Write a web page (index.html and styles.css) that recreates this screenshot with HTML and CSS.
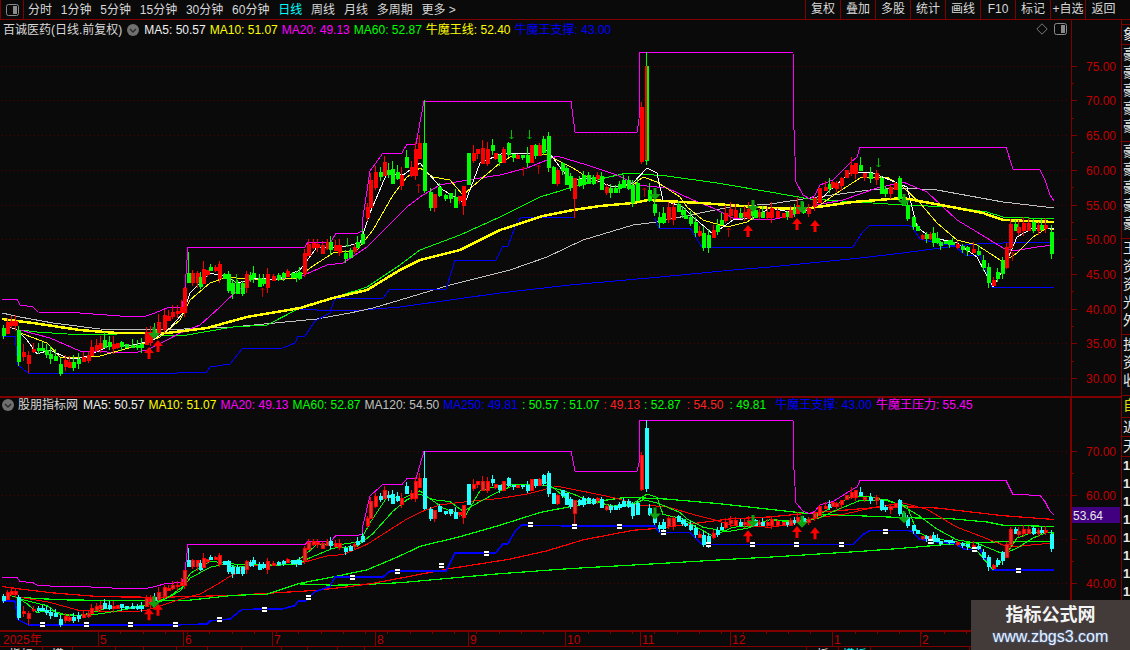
FILE: index.html
```html
<!DOCTYPE html>
<html lang="zh">
<head>
<meta charset="utf-8">
<title>百诚医药 日线</title>
<link rel="stylesheet" href="styles.css">
</head>
<body>
<div class="app">
  <header class="topbar">
    <div class="toggle-cell">
      <svg class="toggle" viewBox="0 0 13 12"><rect x=".5" y=".5" width="12" height="11" rx="2"/><rect class="toggle-fill" x="7" y="2" width="4" height="8"/></svg>
    </div>
    <nav class="tabs">
      <span>分时</span><span>1分钟</span><span>5分钟</span><span>15分钟</span><span>30分钟</span><span>60分钟</span>
      <span class="active">日线</span><span>周线</span><span>月线</span><span>多周期</span><span>更多 &gt;</span>
    </nav>
    <div class="tools">
      <span>复权</span><span>叠加</span><span>多股</span><span>统计</span><span>画线</span><span>F10</span><span>标记</span><span>+自选</span><span>返回</span>
    </div>
  </header>

  <div class="main">
    <div class="charts">
      <section class="panel panel-top">
        <div class="info info-top">
          <span class="title">百诚医药(日线.前复权)</span>
          <svg class="round round-top" viewBox="0 0 12 12"><circle cx="6" cy="6" r="6"/><path d="M3 5l3 3 3-3"/></svg>
          <span class="white">MA5: 50.57</span>
          <span class="yellow">MA10: 51.07</span>
          <span class="magenta">MA20: 49.13</span>
          <span class="lime">MA60: 52.87</span>
          <span class="yellow">牛魔王线: 52.40</span>
          <span class="blue">牛魔王支撑: 43.00</span>
          <svg class="diamond" viewBox="0 0 12 12"><path d="M6 .8L11.2 6 6 11.2.8 6z"/></svg>
          <svg class="toggle" viewBox="0 0 13 12"><rect x=".5" y=".5" width="12" height="11" rx="2"/><rect class="toggle-fill" x="7" y="2" width="4" height="8"/></svg>
        </div>
        <svg id="top" class="plot plot-top" viewBox="0 42 1121 354">
          <g class="ylabels">
            <text x="1116" y="70.5">75.00</text><text x="1116" y="105">70.00</text><text x="1116" y="140">65.00</text>
            <text x="1116" y="174.5">60.00</text><text x="1116" y="209.5">55.00</text><text x="1116" y="244">50.00</text>
            <text x="1116" y="279">45.00</text><text x="1116" y="313.5">40.00</text><text x="1116" y="348">35.00</text>
            <text x="1116" y="383">30.00</text>
          </g>
        </svg>
      </section>

      <section class="panel panel-bottom">
        <div class="info info-bottom">
          <svg class="round" viewBox="0 0 12 12"><circle cx="6" cy="6" r="6"/><path d="M3 5l3 3 3-3"/></svg>
          <span class="title">股朋指标网</span>
          <span class="white ma5-bottom">MA5: 50.57</span>
          <span class="yellow">MA10: 51.07</span>
          <span class="magenta">MA20: 49.13</span>
          <span class="lime">MA60: 52.87</span>
          <span class="grey">MA120: 54.50</span>
          <span class="blue">MA250: 49.81</span>
          <span class="lime">: 50.57</span>
          <span class="lime">: 51.07</span>
          <span class="red">: 49.13</span>
          <span class="lime">: 52.87</span>
          <span class="red nudge">: 54.50</span>
          <span class="lime nudge">: 49.81</span>
          <span class="blue nudge-more">牛魔王支撑: 43.00</span>
          <span class="magenta">牛魔王压力: 55.45</span>
        </div>
        <svg id="bottom" class="plot plot-bottom" viewBox="0 416 1121 214">
          <g class="ylabels">
            <text x="1116" y="455.5">70.00</text><text x="1116" y="499.5">60.00</text>
            <text x="1116" y="544">50.00</text><text x="1116" y="588">40.00</text>
          </g>
          <rect class="price-box" x="1072" y="507" width="48" height="16"/>
          <text class="price-text" x="1073" y="519.5">53.64</text>
        </svg>
      </section>

      <div class="timeaxis">
        <svg id="time" class="time-svg" viewBox="0 632 1121 14">
          <g class="tlabels">
            <text x="3" y="644">2025年</text><text x="100" y="644">5</text><text x="185" y="644">6</text>
            <text x="274" y="644">7</text><text x="377" y="644">8</text><text x="470" y="644">9</text>
            <text x="567" y="644">10</text><text x="642" y="644">11</text><text x="732" y="644">12</text>
            <text x="834" y="644">1</text><text x="922" y="644">2</text>
          </g>
        </svg>
      </div>

      <div class="tabstrip">
        <span class="s43">指标</span><span class="s30">模</span><span class="s43"></span><span class="s28"></span><span class="s33"></span><span class="s31"></span><span class="s34"></span><span class="s40"></span><span class="s26"></span><span class="s30"></span><span class="s27"></span><span class="s442"></span><span class="s32">板</span><span class="s32 cyan">模板</span><span class="s99"></span>
      </div>
    </div>

    <aside class="sidebar">
      <div class="side-gap"></div>
      <div class="side-block b1">象</div>
      <div class="side-block b2">豪<br>豪<br>豪<br>豪<br>豪</div>
      <div class="side-block b2">豪<br>豪<br>豪<br>豪<br>豪</div>
      <div class="side-block b3">王<br>资<br>资<br>光<br>外</div>
      <div class="side-block b4">投<br>资<br>收</div>
      <div class="side-block b5">自</div>
      <div class="side-block b6">近</div>
      <div class="side-block b7">天</div>
      <div class="side-digits">1<br>1<br>1<br>1<br>1<br>1<br>1<br>1<br>1<br>1</div>
    </aside>
  </div>

  <aside class="watermark">
    <div class="wm-title">指标公式网</div>
    <div class="wm-url">www.zbgs3.com</div>
  </aside>
</div>
<script src="chart.js"></script>
</body>
</html>
```

FILE: styles.css
```css
* { box-sizing: border-box; }
html, body { margin: 0; padding: 0; }
body {
  width: 1130px;
  height: 650px;
  overflow: hidden;
  background: #0a0a0a;
  color: #d8d8d8;
  font: 12px/14px "Liberation Sans", "Noto Sans CJK SC", sans-serif;
}
.app { position: relative; width: 1130px; height: 650px; display: flex; flex-direction: column; }

/* top bar */
.topbar { height: 20px; flex: none; display: flex; border-bottom: 1px solid #800000; }
.toggle-cell { width: 24px; border: 1px solid #800000; border-top: 0; border-bottom: 0; display: flex; align-items: center; justify-content: center; }
.toggle { width: 13px; height: 12px; flex: none; }
.toggle rect { fill: none; stroke: #8a8a8a; }
.toggle .toggle-fill { fill: #8a8a8a; stroke: none; }
.tabs { display: flex; gap: 8.8px; padding-left: 4px; align-items: center; flex: 1; }
.tabs .active { color: #00ffff; }
.tools { display: flex; width: 316px; margin-right: 9px; }
.tools span { width: 35px; text-align: center; line-height: 19px; border-left: 1px solid #800000; }
.tools span:last-child { width: 36px; }

/* main */
.main { flex: 1; display: flex; min-height: 0; }
.charts { width: 1121px; flex: none; display: flex; flex-direction: column; }
.panel { display: flex; flex-direction: column; flex: none; }
.panel-top { height: 376px; background: linear-gradient(#800000, #800000) 1071px 0 / 1px 100% no-repeat; }
.panel-bottom {
  height: 234px;
  border-top: 2px solid #800000;
  background: linear-gradient(#800000, #800000) 1070px 0 / 2px 100% no-repeat;
}
.info { display: flex; flex: none; white-space: nowrap; align-items: flex-start; gap: 4px; }
.info-top { height: 22px; padding: 3px 54px 0 3px; }
.info-bottom { height: 18px; padding: 0 0 0 2px; }
.title { color: #d8d8d8; }
.white { color: #f0f0f0; }
.yellow { color: #ffff00; }
.magenta { color: #ff00ff; }
.lime { color: #00ff00; }
.blue { color: #0000ff; }
.grey { color: #c0c0c0; }
.red { color: #ff2020; }
.nudge { margin-left: 2px; }
.nudge-more { margin-left: 5px; }
.ma5-bottom { margin-left: 1px; }
.round { width: 12px; height: 12px; flex: none; margin-top: 1px; }
.round-top { margin-left: 1px; margin-right: 1px; }
.round circle { fill: #707070; }
.round path { fill: none; stroke: #2a2a2a; stroke-width: 1.4; }
.diamond { width: 12px; height: 12px; margin-left: auto; margin-right: 2px; flex: none; }
.diamond path { fill: none; stroke: #7a7a7a; }

.plot { display: block; flex: 1; width: 1121px; }
.ylabels text { fill: #c00000; font-size: 12px; text-anchor: end; }
.price-box { fill: #400080; }
.price-text { fill: #e8e8e8; font-size: 12px; }

/* chart marks */
.plot polyline { fill: none; shape-rendering: crispEdges; stroke-linejoin: round; }
.grid { stroke: #5a0000; stroke-dasharray: 1 3; shape-rendering: crispEdges; }
.ticks { stroke: #800000; fill: none; shape-rendering: crispEdges; }
.candle { shape-rendering: crispEdges; stroke-width: 1; }
.plot-top .up { fill: #ff0000; stroke: #ff0000; }
.plot-top .down { fill: #00ff00; stroke: #00ff00; }
.plot-bottom .up { fill: #ee2a2a; stroke: #ff0000; }
.plot-bottom .down { fill: #22ffff; stroke: #22ffff; }
.spike { fill: #ff0000; stroke: none; }
.arrow-up { fill: #ff0000; }
.arrow-down { fill: #12a312; }
.mini-up { stroke: #c80000; fill: none; }
.mini-down { stroke: #00c000; fill: none; }
.dash { fill: #ffffff; }
.dash-gap { fill: #0a0a0a; }

.plot-top .ma5 { stroke: #ffffff; stroke-width: 1; }
.plot-top .ma10 { stroke: #ffff00; stroke-width: 1; }
.plot-top .ma20 { stroke: #ff00ff; stroke-width: 1; }
.plot-top .ma60 { stroke: #00ff00; stroke-width: 1; }
.plot-top .ma120 { stroke: #c0c0c0; stroke-width: 1; }
.plot-top .ma250 { stroke: #0000ff; stroke-width: 1; }
.plot-top .bull { stroke: #ffff00; stroke-width: 2.5; }
.plot-top .sup { stroke: #0000ff; stroke-width: 1; }
.plot-top .res { stroke: #ff00ff; stroke-width: 1; }
.plot-bottom .ma5, .plot-bottom .ma10 { stroke: #00ff00; stroke-width: 1; }
.plot-bottom .ma20 { stroke: #ff0000; stroke-width: 1; }
.plot-bottom .ma60 { stroke: #00ff00; stroke-width: 1.2; }
.plot-bottom .ma120 { stroke: #ff0000; stroke-width: 1.2; }
.plot-bottom .ma250 { stroke: #00ff00; stroke-width: 1.2; }
.plot-bottom .sup { stroke: #0000ff; stroke-width: 1.6; }
.plot-bottom .res { stroke: #ff00ff; stroke-width: 1; }

/* time axis */
.timeaxis { height: 17px; flex: none; border-top: 2px solid #800000; border-bottom: 1px solid #800000; }
.time-svg { display: block; width: 1121px; height: 14px; }
.tlabels text { fill: #c00000; font-size: 12px; }
.tabstrip { flex: 1; display: flex; overflow: hidden; min-height: 0; line-height: 14px; padding-top: 0; }
.tabstrip span { border-right: 1px solid #800000; text-align: center; height: 14px; padding-top: 1px; color: #e0e0e0; flex: none; }
.tabstrip .cyan { color: #00ffff; }
.s43 { width: 43px; } .s30 { width: 30px; } .s28 { width: 28px; } .s33 { width: 33px; } .s31 { width: 31px; }
.s34 { width: 34px; } .s40 { width: 40px; } .s26 { width: 26px; } .s27 { width: 27px; }
.s442 { width: 442px; } .s32 { width: 32px; } .s99 { width: 99px; }

/* right strip */
.sidebar { width: 9px; flex: none; border-left: 1px solid #800000; overflow: hidden; font-size: 14px; line-height: 18px; color: #e8e8e8; white-space: nowrap; }
.side-gap { height: 5px; border-bottom: 1px solid #800000; }
.side-block { border-bottom: 1px solid #800000; padding-left: 1px; overflow: hidden; }
.b1 { height: 20px; }
.b2 { height: 97px; }
.b3 { height: 96px; }
.b4 { height: 61px; }
.b5 { height: 22px; color: #e0e000; }
.b6 { height: 19px; }
.b7 { height: 20px; }
.side-digits { padding: 0 0 0 1px; font-weight: bold; font-size: 13px; padding-top: 0; }

/* watermark */
.watermark {
  position: absolute;
  left: 971px;
  top: 600px;
  width: 159px;
  height: 50px;
  background: #433a3a;
  text-align: center;
}
.wm-title { color: #f4f4f4; font-size: 18px; font-weight: bold; line-height: 22px; padding-top: 4px; }
.wm-url { color: #e4f0ff; font-size: 16px; line-height: 20px; padding-top: 1px; text-shadow: 0 0 2px #5a8ad0; }
```

FILE: chart.js
```js
var NS = 'http://www.w3.org/2000/svg';
var S = {
  res: '2,299 17,299 20,305 33,307 38,312 80,313 120,316 146,316 155,313 162,310 167,308 182,307 185,288 188,247 305,247 308,242 331,242 336,233 358,233 362,231 363,217 370,171 383,153 402,153 407,144 416,144 424,101 571,101 575,132 637,132 639,120 640,52 793,52 794,130 796,182 803,195 810,199 815,195 820,185 833,180 842,171 850,163 857,157 860,147 1006,147 1013,169 1040,170 1045,180 1050,195 1054,201',
  sup: '2,336 15,336 18,365 28,373 177,373 207,372 210,367 230,364 242,349 283,348 295,343 298,336 305,336 315,321 330,313 335,298 383,298 390,289 446,289 452,270 455,260 496,260 503,246 508,246 515,227 521,217 575,218 655,218 659,228 690,228 702,247 853,247 862,233 870,225 908,225 912,227 920,239 937,243 955,246 965,255 980,255 983,263 992,287 1054,287',
  ma250: '300,309 333,311 363,310 400,307 450,300 500,293 570,285 660,277 733,270 770,267 860,258 903,253 940,248 956,246 977,244 1003,243 1030,242 1054,242',
  ma120: '2,313 20,317 53,323 100,329 160,330 233,327 317,319 350,313 373,308 400,300 450,285 510,270 547,257 583,240 633,225 657,222 690,215 730,207 770,204 810,198 870,190 903,188 937,190 1003,202 1054,208',
  ma60: '20,330 37,332 67,334 117,335 153,335 187,335 233,327 267,325 300,308 333,298 367,287 400,265 420,250 460,235 500,217 540,197 573,187 600,179 627,173 667,176 717,183 770,192 810,199 857,202 903,205 953,207 987,212 1003,217 1054,219',
  bull: '2,319 33,323 80,330 117,333 167,333 207,328 247,317 300,308 333,298 367,290 400,270 420,260 460,250 500,230 543,216 573,210 600,206 633,203 648,200 700,203 770,208 810,208 853,202 903,198 957,208 983,213 1003,220 1054,222',
  ma20: '20,330 50,338 80,351 133,353 147,350 167,340 180,333 200,325 220,307 227,300 250,280 297,278 327,265 343,263 367,247 387,227 407,207 423,195 440,185 467,180 500,175 527,168 557,156 587,165 617,175 637,185 667,188 693,200 713,208 733,218 770,220 790,216 817,205 843,200 877,188 903,182 927,192 957,220 977,232 1003,248 1013,251 1037,247 1054,245',
  ma10: '18,332 47,343 60,357 80,358 100,356 140,345 160,337 180,320 190,300 210,283 227,277 237,278 273,280 297,278 310,268 333,253 357,250 373,230 393,195 407,177 420,168 433,177 450,180 463,195 480,180 500,163 517,153 547,155 573,168 587,177 613,187 633,185 643,177 657,182 680,197 687,207 703,220 727,227 747,222 770,208 790,210 817,207 837,193 860,178 887,177 903,187 920,203 937,223 957,240 977,245 997,258 1003,262 1017,253 1033,237 1047,228 1054,230',
  ma5: '10,327 17,330 27,340 37,354 50,350 67,358 80,358 90,355 107,347 133,345 153,340 170,328 183,313 190,293 210,273 227,277 237,283 257,278 277,280 300,270 317,247 337,248 360,243 370,213 387,173 403,175 420,163 428,173 443,190 465,203 480,163 503,153 533,153 547,150 553,158 570,180 590,178 613,187 633,183 647,168 657,173 663,200 683,207 693,217 713,234 733,220 753,218 770,208 790,212 810,210 830,190 850,173 870,172 890,180 907,187 917,227 930,237 957,243 977,257 993,287 1003,270 1017,237 1033,228 1054,228'
};
var RAW = '3 328 335 g;7 322 333 r 318;11 321 325 r;15 321 325 r;18 330 361 g 326 366;23 352 356 r;28 355 363 r 351 373;33 349 351 r;38 348 350 g;42 348 350 g;50 354 358 g;55 356 360 g;60 364 373 g;65 360 366 r;69 362 367 r;73 362 367 g;78 359 363 g;83 357 361 r;88 355 360 r;91 347 355 r;96 345 350 r;100 343 348 r;104 340 347 g;113 344 348 r;121 342 346 g;126 344 347 g;132 345 347 g;137 345 347 g;141 344 347 g;146 332 344 r;150 332 342 r;158 322 333 r;164 315 329 r;172 312 316 r;177 311 313 r;181 307 312 r;184 288 312 r;188 273 282 g 252;192 273 282 r;197 273 282 r;200 277 286 g;203 269 283 r;210 267 270 g;215 267 270 r;219 264 278 r;228 274 290 g;232 283 293 g;237 283 293 g;242 283 293 g;246 274 287 r;253 273 277 g;259 278 286 g;267 274 287 r;278 275 279 g;287 271 276 r;292 273 277 g;299 272 278 g;304 253 273 r;308 244 255 r;313 243 247 r;317 244 247 r;322 245 253 r;327 242 248 r;330 242 249 g;335 245 250 r;339 245 252 r;345 253 258 g;350 250 257 g;357 242 247 g;362 234 243 g;367 207 217 r;370 180 207 r;375 172 187 r;384 162 175 r;392 169 183 g;397 172 178 g;401 175 185 r;406 157 167 g;411 167 175 r;415 149 175 r;419 143 158 r;424 143 190 g 100;430 192 207 g;434 194 207 r 194 212;439 187 195 g;445 195 198 g;450 193 198 g;455 197 207 g;463 186 205 r 186 215;468 153 184 g;473 153 160 r;477 149 153 r;482 148 163 r;487 149 163 r;492 145 150 g;495 153 158 r;499 155 161 g;503 149 162 r;508 143 154 g;513 154 157 g;517 155 158 r;522 155 157 g;527 155 162 g;531 145 162 r;535 145 155 g;539 145 155 r;543 139 152 g;548 136 167 g 132;553 167 183 g;557 170 183 r;562 163 170 g;566 168 184 g;570 176 187 g;574 178 198 r 178 218;579 179 185 g;583 175 184 g;588 175 183 g;593 177 183 g;597 175 178 r;601 176 189 g;606 187 192 r;610 188 192 g;615 188 192 g;623 180 187 g;628 180 188 g;632 185 202 g;637 183 200 g;641 107 161 r;646 66 160 g 52;649 190 200 g;654 204 212 g;659 217 222 g;663 213 222 g;668 207 219 r;673 207 219 r;678 204 211 g;685 215 218 g;690 217 223 g;695 222 232 g;703 233 247 g;708 235 247 g;713 230 237 r;717 225 231 g;725 213 220 r;730 209 215 r;735 210 217 r;740 213 217 g;748 209 218 r;755 210 217 g;762 212 217 g;767 212 217 r;771 208 217 r;777 211 217 r;783 213 217 r;790 210 217 r;797 205 213 r;803 207 212 g;808 208 213 r;814 198 206 r;819 188 202 r;825 187 190 r;832 182 187 r;836 183 188 r;841 178 185 r;846 170 177 r;851 165 173 r;855 163 173 r;860 165 170 g;864 173 177 r;870 173 178 g;876 173 179 r;881 178 193 g;885 189 193 g;890 187 193 r;895 183 189 r;899 178 198 g;903 198 205 g;907 205 218 g;913 217 226 g;917 226 230 g;922 235 238 r;926 234 238 g;933 233 242 g;940 242 245 g;945 241 243 g;952 242 244 g;957 244 247 r;962 246 249 g;967 247 250 g;973 249 252 r;978 251 254 g;983 260 267 g;988 267 282 g;993 280 285 r;997 272 278 g;1002 260 273 g;1006 247 267 r;1010 224 247 r;1015 224 230 g;1018 227 232 r;1023 223 230 r;1028 223 230 r;1033 222 230 g;1038 225 230 r;1041 225 229 g;1045 225 228 r;1051 232 253 g 225 259';
var BIGUP = [[149,347],[158,340],[748,225],[797,218],[815,220]];
var BIGDOWN = [[154,339],[655,200],[753,212],[802,213],[904,206]];
var MINIUP = [[262,288],[418,184],[523,167],[538,165],[644,188],[728,228],[1012,252]];
var MINIDOWN = [[236,283],[347,247],[511,139],[529,139],[878,167]];
var DASHES = [[42.5,623.7],[86.5,623.7],[130,623.7],[175.5,623.7],[219.5,619],[264,608.7],[308.5,596.7],[352.5,576.7],[397.5,570.7],[441.5,564.7],[486.5,552.7],[530.5,524],[574.4,525.7],[619,525.7],[663.4,531.7],[708,544],[752.4,544],[796.7,544],[841.4,544],[885.7,531],[930.4,540.7],[974.4,549],[1018.7,570]];

function el(parent, name, attrs) {
  var n = document.createElementNS(NS, name);
  for (var k in attrs) n.setAttribute(k, attrs[k]);
  parent.appendChild(n);
  return n;
}
function candles() {
  var list = RAW.split(';').map(function (s) {
    var p = s.split(' ');
    return { x: +p[0], t: +p[1], b: +p[2], c: p[3], h: p[4] ? +p[4] : null, l: p[5] ? +p[5] : null };
  });
  var out = [];
  list.forEach(function (a, i) {
    out.push(a);
    var b = list[i + 1];
    if (!b) return;
    var n = Math.round((b.x - a.x) / 4.45) - 1;
    for (var j = 1; j <= n; j++) {
      var f = j / (n + 1), x = a.x + (b.x - a.x) * f;
      var m = (a.t + a.b) / 2 + ((b.t + b.b) / 2 - (a.t + a.b) / 2) * f;
      out.push({ x: Math.round(x), t: m - 2, b: m + 2, c: (Math.round(x) % 3) ? 'g' : 'r', h: null, l: null });
    }
  });
  out.forEach(function (c) {
    if (c.h === null) c.h = c.t - ((c.x * 7) % 9);
    if (c.l === null) c.l = c.b + ((c.x * 13) % 7);
  });
  return out;
}
var CANDLES = candles();

function drawPanel(svg, map, opts) {
  var first = svg.firstElementChild;
  var g = document.createDocumentFragment();
  var holder = document.createElementNS(NS, 'g');
  g.appendChild(holder);
  opts.grid.forEach(function (y) {
    el(holder, 'line', { 'class': 'grid', x1: 2, x2: 1068, y1: y, y2: y });
  });
  var d = '';
  opts.grid.forEach(function (y) { d += 'M1071 ' + y + 'h6'; });
  opts.minor.forEach(function (y) { d += 'M1071 ' + y + 'h3'; });
  el(holder, 'path', { 'class': 'ticks', d: d });
  opts.lines.forEach(function (k) {
    var pts = S[k].split(' ').map(function (p) {
      var a = p.split(',');
      return a[0] + ',' + map(+a[1]).toFixed(1);
    }).join(' ');
    el(holder, 'polyline', { 'class': k, points: pts });
  });
  CANDLES.forEach(function (c) {
    var cls = 'candle ' + (c.c === 'r' ? 'up' : 'down');
    var cx = Math.round(c.x) + 0.5;
    el(holder, 'line', { 'class': cls, x1: cx, x2: cx, y1: map(c.h), y2: map(c.l) });
    var top = map(c.t), bot = map(c.b);
    el(holder, 'rect', { 'class': cls, x: cx - 1.5, y: top, width: 3, height: Math.max(1, bot - top) });
  });
  if (opts.spike) {
    el(holder, 'rect', { 'class': 'spike', x: 645, y: 66, width: 2, height: 94 });
  }
  BIGUP.forEach(function (a) {
    var x = a[0], y = map(a[1]);
    el(holder, 'polygon', { 'class': 'arrow-up', points: [x, y, x + 5, y + 6, x + 1.5, y + 6, x + 1.5, y + 12, x - 1.5, y + 12, x - 1.5, y + 6, x - 5, y + 6].join(' ') });
  });
  BIGDOWN.forEach(function (a) {
    var x = a[0], y = map(a[1]) + opts.downShift;
    el(holder, 'polygon', { 'class': 'arrow-down', points: [x, y, x + 6, y - 6, x + 1.5, y - 6, x + 1.5, y - 12, x - 1.5, y - 12, x - 1.5, y - 6, x - 6, y - 6].join(' ') });
  });
  if (opts.mini) {
    MINIUP.forEach(function (a) {
      var x = a[0] + 0.5, y = a[1];
      el(holder, 'path', { 'class': 'mini-up', d: 'M' + x + ' ' + (y + 9) + 'V' + y + 'M' + (x - 2) + ' ' + (y + 2) + 'L' + x + ' ' + y + 'L' + (x + 2) + ' ' + (y + 2) });
    });
    MINIDOWN.forEach(function (a) {
      var x = a[0] + 0.5, y = a[1];
      el(holder, 'path', { 'class': 'mini-down', d: 'M' + x + ' ' + (y - 9) + 'V' + y + 'M' + (x - 2) + ' ' + (y - 2) + 'L' + x + ' ' + y + 'L' + (x + 2) + ' ' + (y - 2) });
    });
  }
  if (opts.dashes) {
    DASHES.forEach(function (a) {
      el(holder, 'rect', { 'class': 'dash', x: Math.round(a[0] - 2.5), y: Math.round(a[1] - 2), width: 5, height: 5 });
      el(holder, 'rect', { 'class': 'dash-gap', x: Math.round(a[0] - 2.5), y: Math.round(a[1]), width: 5, height: 1 });
    });
  }
  svg.insertBefore(g, first);
}

drawPanel(document.getElementById('top'), function (y) { return y; }, {
  grid: [66, 100.7, 135.4, 170, 205, 239.6, 274.3, 309, 343.6, 378.3],
  minor: [83.3, 118, 152.7, 187.5, 222.3, 257, 291.6, 326.3, 361],
  lines: ['ma250', 'ma120', 'ma60', 'res', 'sup', 'ma20', 'ma10', 'ma5', 'bull'],
  downShift: 0,
  mini: true,
  spike: true
});
drawPanel(document.getElementById('bottom'), function (y) { return 428.9 + (y - 66) * 0.638; }, {
  grid: [451, 495, 539.5, 583.5],
  minor: [473, 517, 561.5, 605.5],
  lines: ['ma250', 'ma120', 'ma60', 'res', 'sup', 'ma20', 'ma10', 'ma5'],
  downShift: 5,
  dashes: true
});

var time = document.getElementById('time');
var ticks = '';
[98, 183, 272, 375, 468, 565, 640, 730, 832, 920].forEach(function (x) { ticks += 'M' + (x + 0.5) + ' 632v14'; });
for (var i = 98; i < 1070; i += 22.25) { ticks += 'M' + (Math.round(i) + 0.5) + ' 632v2'; }
el(time, 'path', { 'class': 'ticks', d: ticks });
```
